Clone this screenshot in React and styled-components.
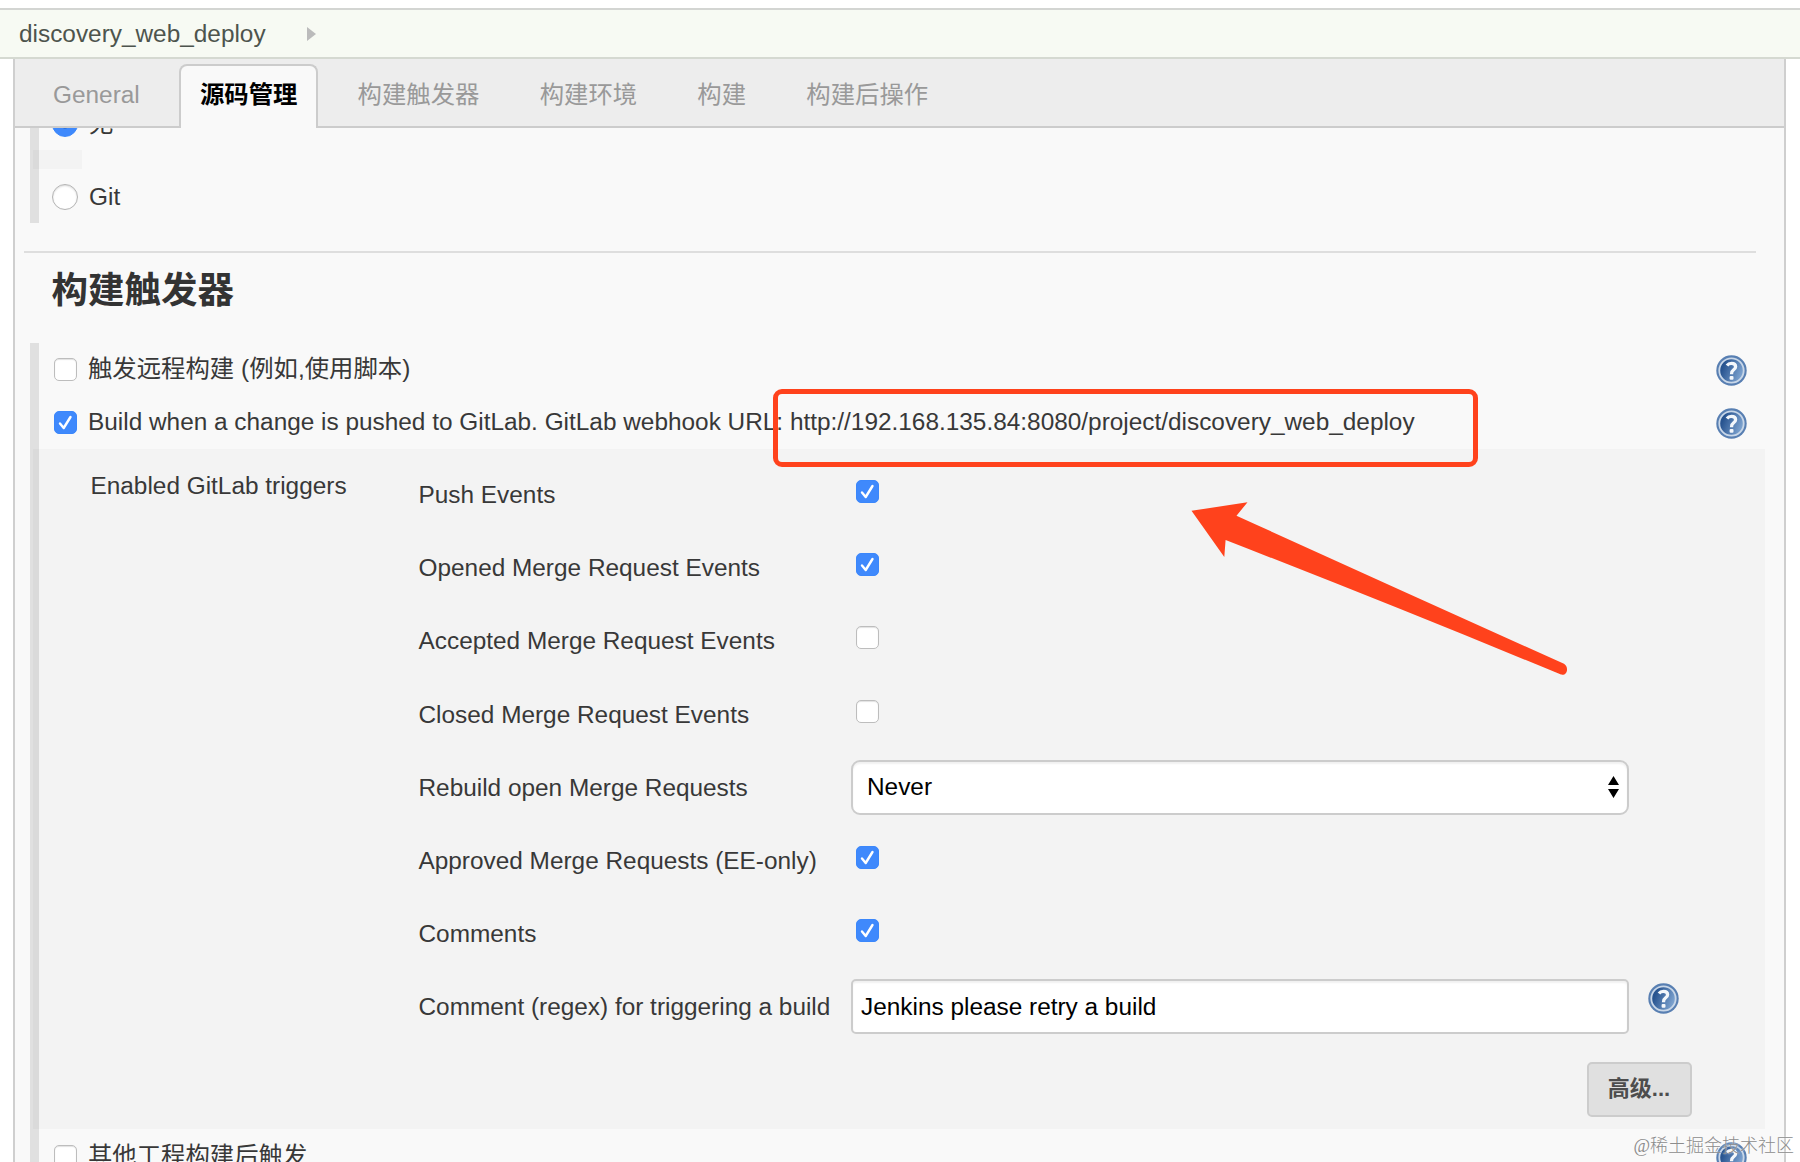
import styled, { createGlobalStyle } from "styled-components";

const GlobalStyle = createGlobalStyle`
    * {
        box-sizing: border-box;
    }
    body {
        margin: 0;
        background: #fff;
        color: #383838;
        font-family: "Liberation Sans", "Noto Sans CJK SC", sans-serif;
        font-size: 24.38px;
    }
`
const Page = styled.div`
    position: relative;
    width: 1800px;
    height: 1162px;
    padding-top: 8px;
    overflow: hidden;
    display: flex;
    flex-direction: column;
`
const Breadcrumb = styled.header`
    display: flex;
    align-items: center;
    flex: none;
    gap: 41px;
    height: 51px;
    padding: 0 0 0 19px;
    background: #f7faf3;
    border-top: 2px solid #d3d5d2;
    border-bottom: 2px solid #d5d9d1;
    color: #4d544d;
`
const Panel = styled.main`
    display: flex;
    flex-direction: column;
    flex: 1;
    min-height: 0;
    margin: 0 14px 0 13px;
    background: #f9f9f9;
    border: solid #cfcfcf;
    border-width: 0 2px;
    overflow: hidden;
`
const Tabs = styled.nav`
    display: flex;
    flex: none;
    gap: 19.2px;
    height: 69px;
    padding: 5px 0 0 17.5px;
    background: #ededed;
    border-bottom: 2px solid #ccc;
`
const Tab = styled.div`
    height: 64px;
    line-height: 58px;
    padding: 0 18.5px;
    border: 2px solid ${({ $active }) => ($active ? "#ccc" : "transparent")};
    border-bottom: 0;
    border-radius: 8px 8px 0 0;
    background: ${({ $active }) => ($active ? "#f9f9f9" : "transparent")};
    color: ${({ $active }) => ($active ? "#000" : "#999")};
    font-weight: ${({ $active }) => ($active ? "bold" : "normal")};
`
const Section = styled.section`
    display: flex;
    flex-direction: column;
    flex: none;
    height: ${({ $height }) => $height}px;
    margin-left: 14.5px;
    border-left: 9.5px solid #e0e0e0;
`
/* the source list is scrolled, its first option is half under the tabs */
const ScrolledSection = styled(Section)`
    overflow-y: clip;
`
const OptionRow = styled.div`
    display: flex;
    align-items: center;
    flex: none;
    gap: 11.5px;
    height: ${({ $height }) => $height}px;
    margin-top: ${({ $scrolled }) => ($scrolled ? -15 : 0)}px;
    margin-bottom: ${({ $scrolled }) => ($scrolled ? 15 : 0)}px;
    padding: 0 37px 0 15px;
    white-space: nowrap;
`
const OptionText = styled.span`
    flex: 1;
    padding-bottom: ${({ $lift }) => $lift || 0}px;
`
const Spacer = styled.div`
    flex: none;
    width: 49px;
    height: 19px;
    margin-left: -6px;
    background: rgba(0, 0, 0, 0.025);
`
const RadioDot = styled.span`
    flex: none;
    width: 26px;
    height: 26px;
    margin-left: -2px;
    border-radius: 50%;
    border: 1px solid ${({ $on }) => ($on ? "#3b87fb" : "#b4b4b4")};
    background: ${({ $on }) => ($on ? "radial-gradient(circle, #1f5fc0 4px, #3f89fc 5px)" : "#fff")};
    box-shadow: ${({ $on }) => ($on ? "none" : "inset 0 1px 2px rgba(0, 0, 0, 0.15)")};
`
const Divider = styled.hr`
    flex: none;
    width: 1732px;
    height: 2px;
    margin: 28px 0 0 9px;
    border: 0;
    background: #dedede;
`
const Heading = styled.h2`
    flex: none;
    height: 90px;
    margin: 0;
    padding-left: 36.5px;
    color: #333;
    font-size: 36.5px;
    line-height: 76px;
`
const Box = styled.span`
    display: flex;
    flex: none;
    width: 23px;
    height: 23px;
    border-radius: 5px;
    border: 1px solid ${({ $on }) => ($on ? "#3b87fb" : "#bdbdbd")};
    background: ${({ $on }) => ($on ? "#3f89fc" : "#fff")};
    box-shadow: ${({ $on }) => ($on ? "none" : "inset 0 1px 1px rgba(0, 0, 0, 0.12)")};
`
const Settings = styled.div`
    display: flex;
    flex: none;
    width: 1732px;
    height: 680px;
    margin-left: -6px;
    padding-left: 58px;
    background: rgba(0, 0, 0, 0.025);
`
const SettingsTitle = styled.div`
    width: 328px;
    padding-top: 23px;
    line-height: 28px;
`
const Fields = styled.div`
    display: flex;
    flex-direction: column;
    padding-top: 18px;
`
const Field = styled.div`
    display: grid;
    grid-template-columns: 432.5px 778px 31px;
    height: 73.2px;
    flex: none;
`
const FieldLabel = styled.label`
    padding-top: 14px;
    line-height: 28px;
    white-space: nowrap;
`
const CheckCell = styled.div`
    padding: 13px 0 0 5px;
`
const ControlBox = styled.div`
    display: flex;
    align-items: center;
    justify-content: space-between;
    height: 55px;
    padding: 0 8px 0 ${({ $select }) => ($select ? 14 : 8)}px;
    background: #fff;
    border: 2px solid #ccc;
    border-radius: ${({ $select }) => ($select ? 9 : 5)}px;
    box-shadow: inset 0 2px 2px rgba(0, 0, 0, 0.06);
    color: #000;
`
const HelpCell = styled.div`
    padding: 4px 0 0 18.5px;
`
const AdvancedButton = styled.button`
    align-self: flex-end;
    flex: none;
    width: 105px;
    height: 55px;
    margin: 9px -31.5px 0 0;
    padding: 0 0 6px;
    background: #e0e0e0;
    border: 2px solid #ccc;
    border-radius: 5px;
    color: #4d4d4d;
    font: bold 22px "Liberation Sans", "Noto Sans CJK SC", sans-serif;
`
const Highlight = styled.div`
    position: absolute;
    left: 773px;
    top: 389px;
    width: 705px;
    height: 78px;
    border: 5.5px solid #ff421c;
    border-radius: 9px;
`
const Pointer = styled.svg`
    position: absolute;
    left: 1180px;
    top: 490px;
`
const Watermark = styled.div`
    position: absolute;
    right: 6px;
    bottom: 4px;
    color: #8c8c8c;
    font: 300 18px/24px "Liberation Serif", "Noto Sans CJK SC", serif;
    text-shadow: 0 0 2px #fff;
`
const SvgIcon = styled.svg`
    display: block;
    flex: none;

    ${OptionRow} > & {
        margin-top: 2px;
    }
`

const tabs = ["General", "源码管理", "构建触发器", "构建环境", "构建", "构建后操作"];

const fields = [
    { label: "Push Events", checked: true },
    { label: "Opened Merge Request Events", checked: true },
    { label: "Accepted Merge Request Events", checked: false },
    { label: "Closed Merge Request Events", checked: false },
    { label: "Rebuild open Merge Requests", select: "Never" },
    { label: "Approved Merge Requests (EE-only)", checked: true },
    { label: "Comments", checked: true },
    { label: "Comment (regex) for triggering a build", input: "Jenkins please retry a build" },
];

function Checkbox({ on }) {
    return (
        <Box $on={on}>
            {on && (
                <SvgIcon width="21" height="21" viewBox="0 0 21 21">
                    <path d="M5 11.5L8.7 16L15.5 5" fill="none" stroke="#fff" strokeWidth="2.4" strokeLinecap="round" strokeLinejoin="round" />
                </SvgIcon>
            )}
        </Box>
    )
}

function HelpIcon() {
    return (
        <SvgIcon width="31" height="31" viewBox="0 0 31 31">
            <defs>
                <linearGradient id="help" x1="0" y1="0.3" x2="1" y2="0.7">
                    <stop offset="0.15" stopColor="#285490" />
                    <stop offset="1" stopColor="#86abd6" />
                </linearGradient>
            </defs>
            <circle cx="15.5" cy="15.5" r="15.2" fill="#587fb2" />
            <circle cx="15.5" cy="15.5" r="12.2" fill="url(#help)" stroke="#c9d7e8" strokeWidth="1.8" />
            <path d="M11 10.4Q12.5 8.4 15.5 8.4Q19.6 8.4 19.6 11.8Q19.6 13.8 17.3 15.2Q15.5 16.3 15.5 19.2" fill="none" stroke="#f4f7fb" strokeWidth="3.3" />
            <rect x="13.6" y="21" width="3.9" height="3.8" rx="1" fill="#f4f7fb" />
        </SvgIcon>
    )
}

function App() {
    return (
        <Page>
            <GlobalStyle />
            <Breadcrumb>
                <span>discovery_web_deploy</span>
                <SvgIcon width="9" height="14" viewBox="0 0 9 14">
                    <path d="M0 0L9 7L0 14Z" fill="#bbb" />
                </SvgIcon>
            </Breadcrumb>

            <Panel>
                <Tabs>
                    {tabs.map((tab, i) => (
                        <Tab key={tab} $active={i === 1}>{tab}</Tab>
                    ))}
                </Tabs>

                <ScrolledSection $height={95}>
                    <OptionRow $height={22} $scrolled>
                        <RadioDot $on />
                        <OptionText $lift={6}>无</OptionText>
                    </OptionRow>
                    <Spacer />
                    <OptionRow $height={56}>
                        <RadioDot />
                        <OptionText>Git</OptionText>
                    </OptionRow>
                </ScrolledSection>

                <Divider />
                <Heading>构建触发器</Heading>

                <Section $height={830}>
                    <OptionRow $height={53}>
                        <Checkbox />
                        <OptionText $lift={6}>触发远程构建 (例如,使用脚本)</OptionText>
                        <HelpIcon />
                    </OptionRow>
                    <OptionRow $height={53}>
                        <Checkbox on />
                        <OptionText $lift={2}>Build when a change is pushed to GitLab. GitLab webhook URL: http://192.168.135.84:8080/project/discovery_web_deploy</OptionText>
                        <HelpIcon />
                    </OptionRow>
                    <Settings>
                        <SettingsTitle>Enabled GitLab triggers</SettingsTitle>
                        <Fields>
                            {fields.map(({ label, checked, select, input }) => (
                                <Field key={label}>
                                    <FieldLabel>{label}</FieldLabel>
                                    {select && (
                                        <ControlBox $select>
                                            {select}
                                            <SvgIcon width="11" height="22" viewBox="0 0 11 22">
                                                <path d="M0 9L5.5 0L11 9ZM0 13L5.5 22L11 13Z" />
                                            </SvgIcon>
                                        </ControlBox>
                                    )}
                                    {input && <ControlBox>{input}</ControlBox>}
                                    {!select && !input && <CheckCell><Checkbox on={checked} /></CheckCell>}
                                    {input && <HelpCell><HelpIcon /></HelpCell>}
                                </Field>
                            ))}
                            <AdvancedButton>高级...</AdvancedButton>
                        </Fields>
                    </Settings>
                    <OptionRow $height={54}>
                        <Checkbox />
                        <OptionText $lift={6}>其他工程构建后触发</OptionText>
                        <HelpIcon />
                    </OptionRow>
                </Section>
            </Panel>

            <Highlight />
            <Pointer width="400" height="200" viewBox="0 0 400 200">
                <path d="M11.5 20.8L67.5 12.3L56.5 25.7Q220 100 384 173.8C389.5 177.5 387 186 381 184.6Q220 118 45.6 50L44.3 67Z" fill="#ff421c" />
            </Pointer>
            <Watermark>@稀土掘金技术社区</Watermark>
        </Page>
    )
}

export default App
